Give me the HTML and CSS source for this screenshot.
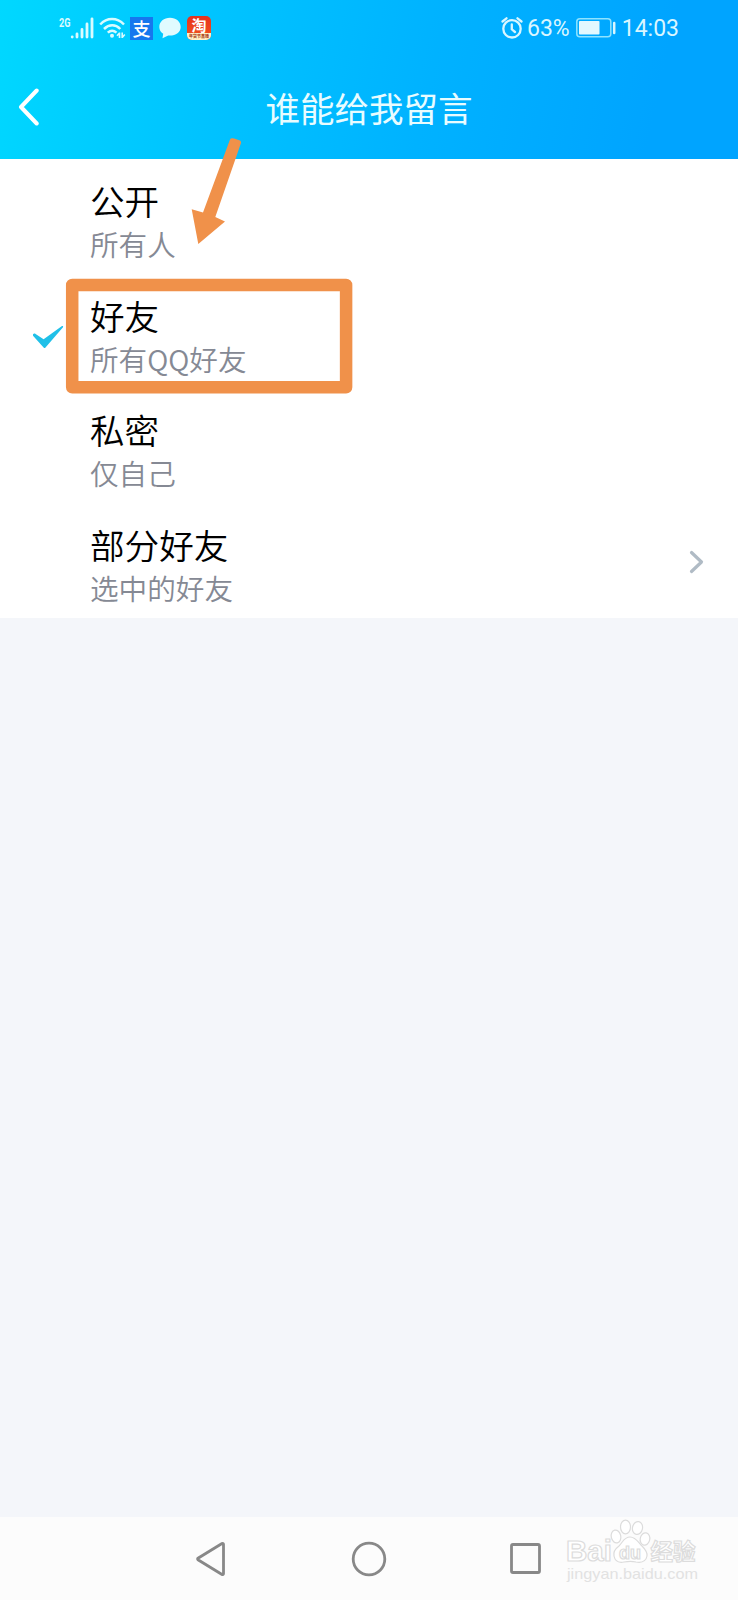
FILE: index.html
```html
<!DOCTYPE html>
<html lang="zh-CN">
<head>
<meta charset="utf-8">
<title>谁能给我留言</title>
<link rel="stylesheet" href="styles.css">
</head>
<body>
<div class="screen">
  <header class="header">
    <div class="status">
      <div class="status-left">
        <svg class="network" width="12" height="18" viewBox="0 -3 12 18"><text x="0" y="10.500" textLength="11.500" lengthAdjust="spacingAndGlyphs">2G</text></svg>
        <svg class="signal" width="24" height="22" viewBox="0 0 24 22" stroke="#d9fbff" stroke-width="2.8" stroke-linecap="round"><path d="M2.2 19.8v.2M7 17v3M12 12.5V20M17 7v13M22 1.8V20"/></svg>
        <svg class="wifi" width="27" height="22" viewBox="0 0 27 22" fill="none" stroke="#d9fbff" stroke-width="2.5"><path d="M1.2 7.5C8 .2 18 .2 25 7.500M5 12C10 7 16.500 7 21.300 12M8.800 15.700c2.700-2.500 6-2.500 8.700 0"/><circle cx="13" cy="18.800" r="2" fill="#d9fbff" stroke="none"/><path d="M20.500 15.500v5.500M18 18.800l2.500-2.800M23.200 15.500v5.500M25.800 17.500l-2.600 3" stroke-width="1.600"/></svg>
        <span class="pay">支</span>
        <svg class="chat" width="22" height="22" viewBox="0 0 22 22"><path fill="#e0fbff" d="M11 .8C5 .8.300 4.700.300 9.900c0 3 1.500 5.300 3.900 6.900L3.500 21.200l5.700-2.700c7 .6 12.500-3 12.500-8.600C21.700 4.700 17 .8 11 .8Z"/></svg>
        <span class="shop"><span class="shop-glyph">淘</span><span class="shop-strip">年货节直播</span></span>
      </div>
      <div class="status-right">
        <svg class="alarm" width="22" height="22" viewBox="0 0 22 22" fill="none" stroke="#d9f6ff" stroke-width="2.300" stroke-linecap="round"><circle cx="11" cy="11.800" r="8.700"/><path d="M1.500 4.500 5.500 1.300M16.500 1.300l4 3.200M10.800 7.500v4.800l3.200 2.700"/></svg>
        <span class="percent">63%</span>
        <svg class="battery" width="40" height="20" viewBox="0 0 40 20"><rect x=".8" y=".8" width="34" height="18" rx="3" fill="none" stroke="#8fe3ff" stroke-width="1.500"/><rect x="3" y="3" width="20.500" height="13.500" rx=".8" fill="#e2f8ff"/><path d="M38.200 5v10" stroke="#d9f6ff" stroke-width="2.500" stroke-linecap="round"/></svg>
        <span class="clock">14:03</span>
      </div>
    </div>
    <div class="titlebar">
      <svg class="back" width="22" height="38" viewBox="0 0 22 38" fill="none" stroke="#fff" stroke-width="4" stroke-linecap="round" stroke-linejoin="round"><path d="M18.700 2.500 3 19l15.700 16.500"/></svg>
      <h1 class="title">谁能给我留言</h1>
    </div>
  </header>

  <main class="options">
    <div class="option">
      <div class="mark"></div>
      <div class="text"><div class="label">公开</div><div class="hint">所有人</div></div>
    </div>
    <div class="option">
      <div class="mark"><svg width="32" height="24" viewBox="0 0 32 24"><path fill="#20c0e8" d="M1 9.300c.7-1 1.800-.9 2.600-.4l8 5.300L30 1c.8-.4 1.500.3 1 1.200L13.500 22.500c-.6.700-1.300.7-1.900 0L1 10.700Z"/></svg></div>
      <div class="text"><div class="label">好友</div><div class="hint">所有QQ好友</div></div>
    </div>
    <div class="option">
      <div class="mark"></div>
      <div class="text"><div class="label">私密</div><div class="hint">仅自己</div></div>
    </div>
    <div class="option">
      <div class="mark"></div>
      <div class="text"><div class="label">部分好友</div><div class="hint">选中的好友</div></div>
      <svg class="more" width="16" height="24" viewBox="0 0 16 24" fill="none" stroke="#b0bbc5" stroke-width="3.200" stroke-linecap="round" stroke-linejoin="round"><path d="M2.500 2.500 12.500 12 2.500 21.500"/></svg>
    </div>
  </main>

  <nav class="navbar">
    <svg width="32" height="36" viewBox="0 0 32 36"><path d="M27.500 3.300v29.400a1 1 0 0 1-1.500.8L2 18.800a1 1 0 0 1 0-1.600L26 2.500a1 1 0 0 1 1.500.8Z"/></svg>
    <svg width="36" height="36" viewBox="0 0 36 36"><circle cx="18" cy="18" r="15.800"/></svg>
    <svg width="32" height="32" viewBox="0 0 32 32"><rect x="1.500" y="1.500" width="28" height="28" rx="1.500"/></svg>
  </nav>

  <svg class="annotation" width="300" height="270" viewBox="60 130 300 270">
    <path fill="#f0914a" d="M230 139.500Q231 137.500 234 138.500L240 140.500Q241.500 141.500 241 143L215.300 217L225 221.500L198.300 244L191.700 209.300L203 212.500Z"/>
    <rect x="72.200" y="285" width="273.900" height="102.300" fill="none" stroke="#f0914a" stroke-width="12.500" stroke-linejoin="round"/>
  </svg>

  <svg class="watermark" width="150" height="70" viewBox="560 1515 150 70">
    <g fill="#fff" stroke="#dcdcdc" stroke-width="1.200">
      <text x="566" y="1561" class="wm-brand" textLength="46" lengthAdjust="spacingAndGlyphs">Bai</text>
      <ellipse cx="616" cy="1536.500" rx="4.800" ry="6.500" transform="rotate(-12 616 1536.500)"/>
      <ellipse cx="625.500" cy="1527" rx="5" ry="6.800"/>
      <ellipse cx="637.500" cy="1528" rx="5" ry="6.500" transform="rotate(12 637.500 1528)"/>
      <ellipse cx="645" cy="1539" rx="4.800" ry="6.200" transform="rotate(12 645 1539)"/>
      <path d="M630 1537c-6 0-7 5-11 9-4 3-6 6-5 10 1 5 5 7 10 6 5-1 8-1 12 0 6 1 10-1 11-6 .5-4-2-7-5-10-4-4-6-9-12-9Z"/>
      <text x="619" y="1559" class="wm-du">du</text>
      <text x="650.500" y="1560" class="wm-cn">经验</text>
    </g>
    <text x="567" y="1579" class="wm-url" textLength="131" lengthAdjust="spacingAndGlyphs">jingyan.baidu.com</text>
  </svg>
</div>
</body>
</html>
```
FILE: styles.css
```css
body {
  margin: 0;
  font-family: "Noto Sans CJK SC", sans-serif;
}

.screen {
  position: relative;
  display: flex;
  flex-direction: column;
  width: 738px;
  height: 1600px;
  overflow: hidden;
  background: #f4f6fa;
}

.header {
  height: 158.500px;
  flex: none;
  color: #fff;
  background: linear-gradient(102deg, #00d8ff 0%, #00c4ff 28%, #00b2ff 58%, #00a4ff 88%);
}

.status {
  display: flex;
  justify-content: space-between;
  height: 56px;
  padding: 0 59px 0 59px;
  color: #d9f6ff;
}

.status-left,
.status-right {
  display: flex;
  align-items: center;
}

.network {
  margin-bottom: 12px;
  overflow: visible;
  fill: #d9fbff;
  font: 700 12.500px Roboto, sans-serif;
}

.signal {
  margin-left: -1px;
}

.wifi {
  margin-left: 5px;
}

.pay {
  width: 23px;
  height: 23px;
  margin-left: 4px;
  background: #1677ee;
  color: #fff;
  font-size: 18px;
  font-weight: 500;
  line-height: 22px;
  text-align: center;
}

.chat {
  margin-left: 6px;
}

.shop {
  display: flex;
  flex-direction: column;
  width: 24px;
  height: 24px;
  margin-left: 6px;
  border-radius: 5px;
  background: linear-gradient(#e6321e, #f2551d);
  color: #fff;
  text-align: center;
}

.shop-glyph {
  font-size: 15px;
  font-weight: 700;
  line-height: 17px;
}

.shop-strip {
  height: 7px;
  border-radius: 0 0 5px 5px;
  background: #fff0c8;
  color: #a63410;
  font-size: 4px;
  font-weight: 700;
  line-height: 6px;
}

.percent {
  margin: 2px 0 0 4px;
  font: 400 23px/28px Roboto, sans-serif;
}

.battery {
  margin-left: 6px;
}

.clock {
  margin: 2px 0 0 6px;
  font: 400 23px/28px Roboto, sans-serif;
}

.titlebar {
  display: flex;
  align-items: center;
  height: 102px;
  padding-left: 18px;
}

.title {
  flex: 1;
  margin: 0 40px 0 0;
  color: #e8fcff;
  font-size: 34.500px;
  font-weight: 400;
  line-height: 50px;
  text-align: center;
}

.options {
  flex: none;
  height: 459px;
  display: grid;
  grid-template-rows: repeat(4, 1fr);
  background: #fff;
}

.option {
  display: flex;
  align-items: center;
  padding-right: 33px;
}

.mark {
  display: flex;
  width: 58px;
  padding-left: 32px;
  padding-top: 12px;
}

.text {
  flex: 1;
  padding-top: 11px;
}

.label {
  color: #000;
  font-size: 34.600px;
  font-weight: 350;
  line-height: 44px;
}

.hint {
  color: #858994;
  font-size: 28.600px;
  font-weight: 350;
  line-height: 43px;
}

.more {
  margin-top: 3px;
}

.navbar {
  display: flex;
  align-items: center;
  justify-content: space-between;
  height: 83px;
  margin-top: auto;
  padding: 0 196px;
  background: #fcfcfc;
}

.navbar svg {
  fill: none;
  stroke: #888;
  stroke-width: 2.800px;
}

.annotation {
  position: absolute;
  left: 60px;
  top: 130px;
}

.watermark {
  position: absolute;
  left: 560px;
  top: 1515px;
}

.wm-brand {
  font: 700 29px "Liberation Sans", sans-serif;
}

.wm-du {
  font: 700 18px "Liberation Sans", sans-serif;
}

.wm-cn {
  font: 700 22.500px "Noto Sans CJK SC", sans-serif;
}

.wm-url {
  fill: #e2e2e2;
  font: 400 15px "Liberation Sans", sans-serif;
}
```
